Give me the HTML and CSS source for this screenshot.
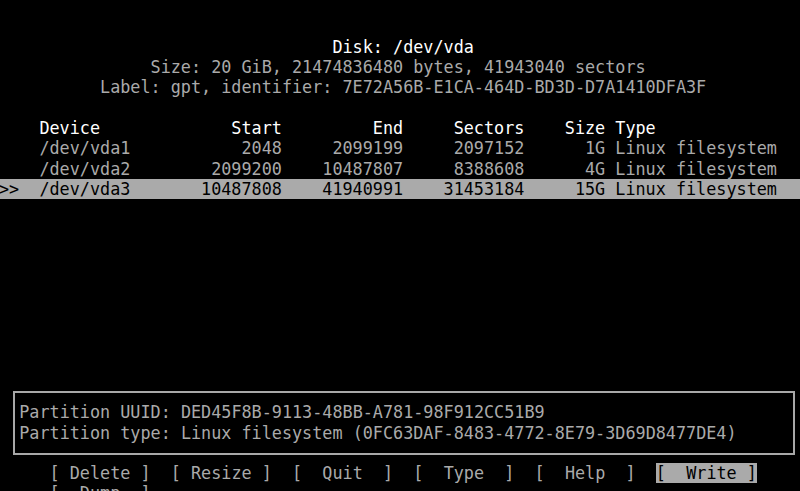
FILE: index.html
```html
<!DOCTYPE html>
<html lang="en">
<head>
<meta charset="utf-8">
<title>cfdisk /dev/vda</title>
<link rel="stylesheet" href="styles.css">
</head>
<body>
<main class="term">
<div class="line bright">                                 Disk: /dev/vda</div>
<div class="line">               Size: 20 GiB, 21474836480 bytes, 41943040 sectors</div>
<div class="line">          Label: gpt, identifier: 7E72A56B-E1CA-464D-BD3D-D7A1410DFA3F</div>
<div class="line"> </div>
<div class="line bright">    Device             Start         End     Sectors    Size Type</div>
<div class="line">    /dev/vda1           2048     2099199     2097152      1G Linux filesystem</div>
<div class="line">    /dev/vda2        2099200    10487807     8388608      4G Linux filesystem</div>
<div class="line selected">&gt;&gt;  /dev/vda3       10487808    41940991    31453184     15G Linux filesystem</div>
<div class="spacer"></div>
<section class="infobox">
<div class="line">Partition UUID: DED45F8B-9113-48BB-A781-98F912CC51B9</div>
<div class="line">Partition type: Linux filesystem (0FC63DAF-8483-4772-8E79-3D69D8477DE4)</div>
</section>
<nav class="menu">
<div class="line">     <span class="btn">[ Delete ]</span>  <span class="btn">[ Resize ]</span>  <span class="btn">[  Quit  ]</span>  <span class="btn">[  Type  ]</span>  <span class="btn">[  Help  ]</span>  <span class="btn active">[  Write ]</span></div>
<div class="line">     <span class="btn">[  Dump  ]</span></div>
</nav>
</main>
</body>
</html>
```
FILE: styles.css
```css
html, body {
  margin: 0;
  padding: 0;
  background: #000;
  width: 800px;
  height: 491px;
  overflow: hidden;
}

.term {
  margin-left: -1px;
  padding-top: 36.85px;
  width: 820px;
  font-family: "DejaVu Sans Mono", "Liberation Mono", monospace;
  font-size: 16.8px;
  color: #aaaaaa;
}

.line {
  height: 20.3px;
  line-height: 20.3px;
  white-space: pre;
}

.bright {
  color: #ffffff;
}

.selected {
  background: #aaaaaa;
  color: #000000;
}

.spacer {
  height: 191.75px; /* 9 rows + gap to box border */
}

.infobox {
  margin-left: 14px;
  width: 782px;
  box-sizing: border-box;
  border: 2px solid #a8a8a8;
  padding: 9.25px 0 10.15px 4.24px;
}

.menu {
  margin-top: 8.15px;
}

.btn.active {
  background: #aaaaaa;
  color: #000000;
}
```
